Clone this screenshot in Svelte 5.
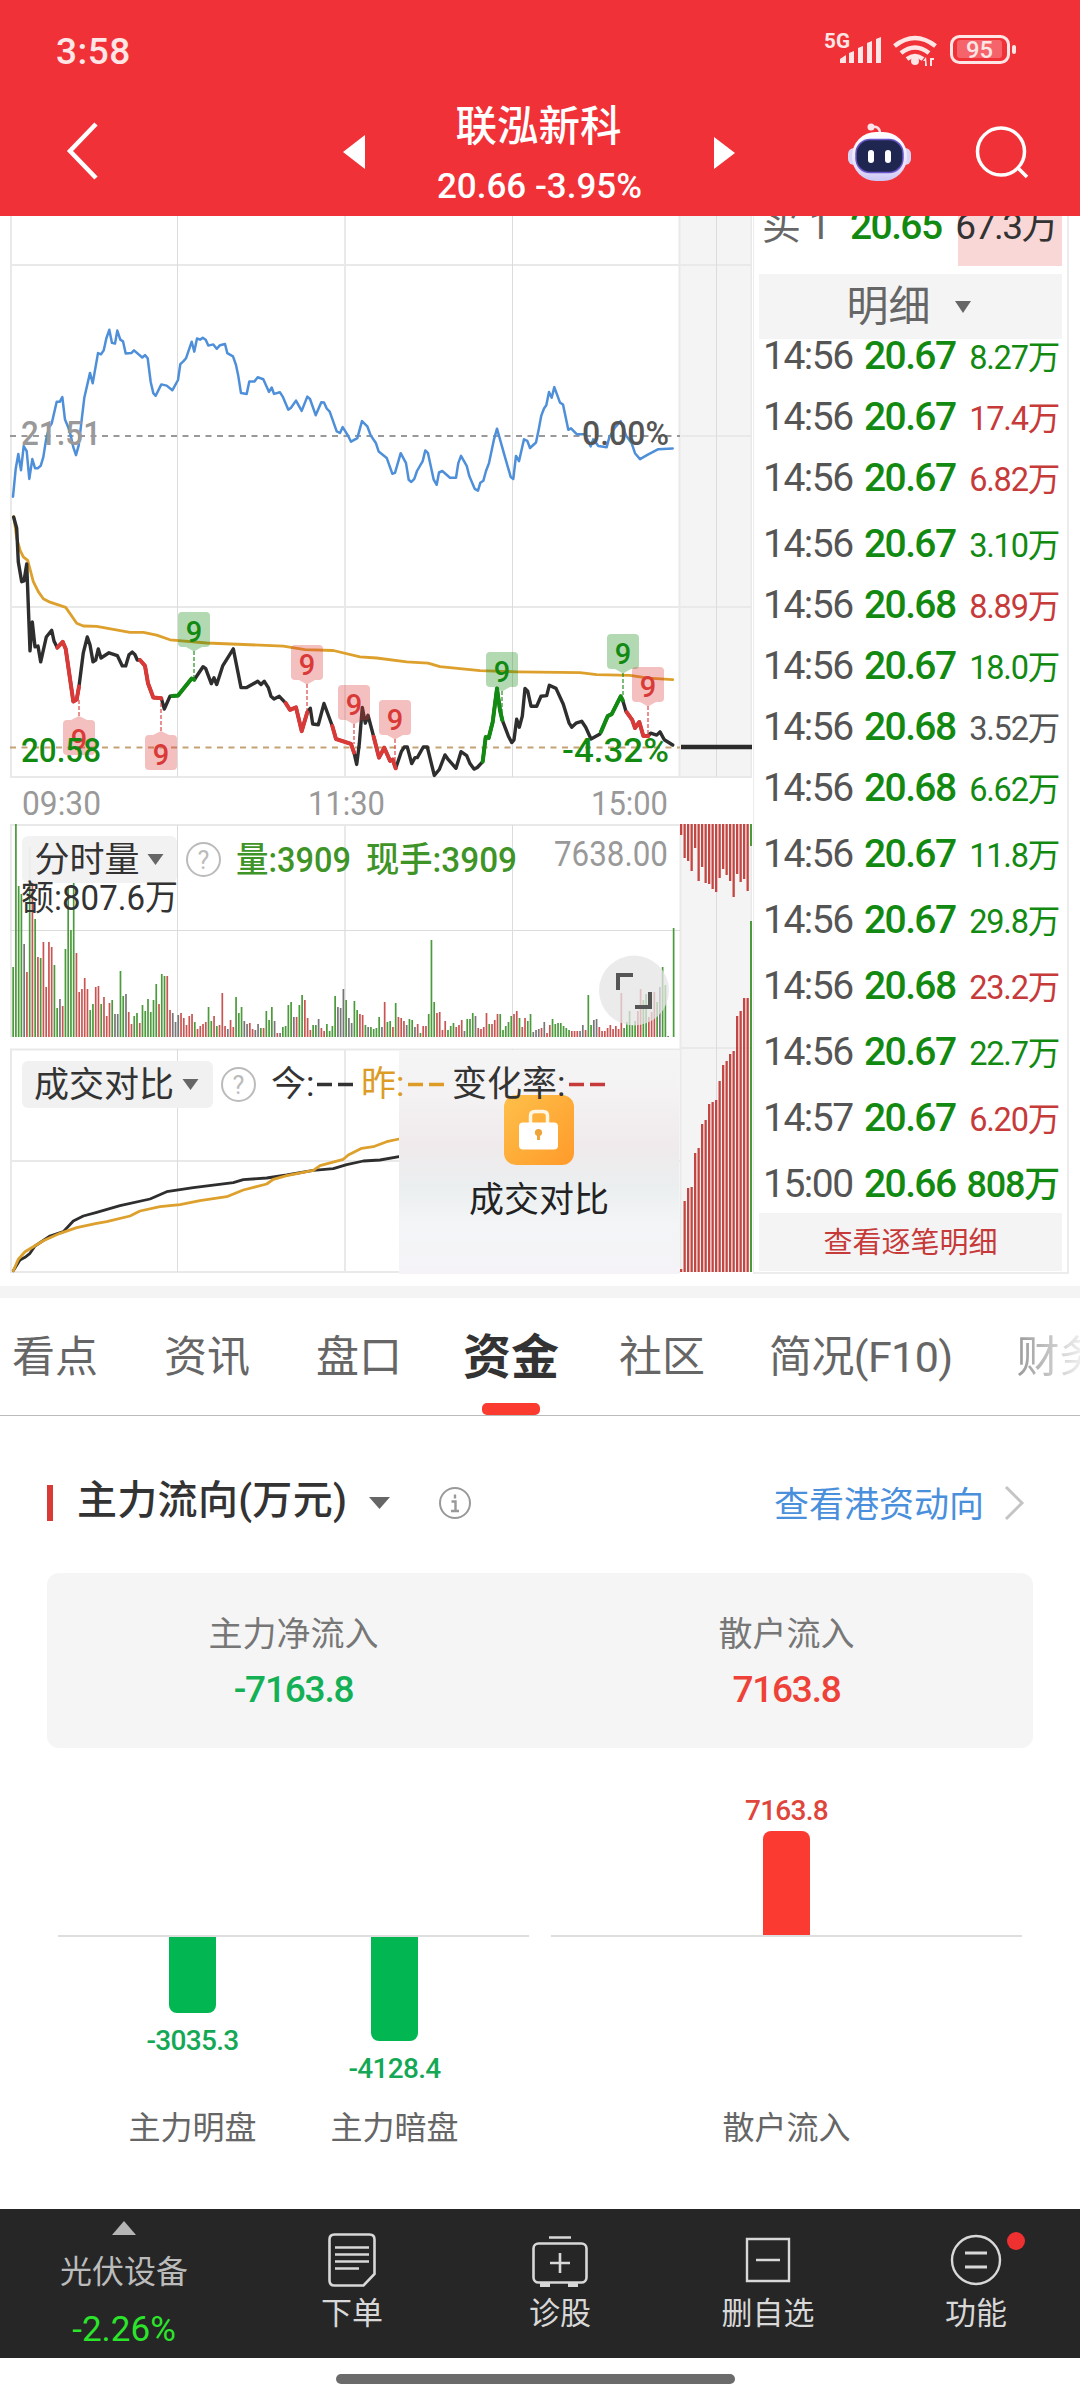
<script>
    // every point is "x,y" in chart units, see plot() for the scale
    const indexLine = "39,725 47,655 55,617 63,658 71,597 80,610 88,680 97,630 105,653 113,653 122,647 130,625 138,582 147,550 155,540 170,485 179,485 187,473 195,530 204,548 212,570 220,600 228,620 236,595 245,530 253,475 270,412 278,438 294,362 303,365 311,355 319,325 328,303 336,336 345,338 352,305 361,328 369,332 377,363 394,362 402,355 427,373 435,367 443,375 452,435 460,463 467,470 484,441 500,444 517,456 534,430 541,390 550,383 558,375 575,333 583,358 591,325 600,328 608,323 617,328 625,343 640,340 650,351 660,342 675,339 682,362 699,370 708,392 715,420 723,463 740,465 748,434 763,434 773,423 790,428 807,460 815,449 822,465 840,461 848,472 865,505 873,500 888,482 905,508 922,472 930,478 947,519 964,486 972,487 980,502 989,510 1010,560 1020,564 1028,549 1045,572 1053,586 1072,577 1086,534 1102,547 1112,570 1128,590 1136,611 1160,627 1177,667 1185,665 1202,615 1218,640 1226,682 1234,688 1243,680 1251,660 1268,635 1276,608 1284,615 1301,682 1310,695 1317,664 1327,660 1350,677 1368,677 1375,640 1383,622 1400,647 1408,673 1424,705 1434,710 1441,690 1450,685 1458,660 1467,640 1482,580 1491,553 1500,580 1515,625 1532,675 1540,680 1548,622 1557,635 1572,580 1582,584 1590,602 1608,588 1616,555 1624,520 1632,502 1639,494 1647,460 1655,475 1663,448 1680,487 1689,492 1705,556 1713,552 1730,567 1755,567 1772,598 1780,580 1795,597 1820,600 1828,575 1845,550 1862,534 1878,570 1895,590 1905,615 1920,630 1945,618 1975,605 2018,603";
    const averageLine = "41,775 50,830 60,860 70,877 83,886 100,940 115,965 130,983 150,992 197,1005 230,1045 250,1052 290,1053 390,1068 430,1068 470,1075 510,1087 620,1095 850,1103 915,1112 1000,1114 1080,1130 1130,1133 1220,1143 1284,1146 1320,1155 1440,1165 1550,1168 1740,1170 1790,1175 1890,1177 1945,1184 2018,1188";
    const priceLine = "41,777 50,805 55,890 65,940 72,938 80,895 83,960 90,1115 97,1042 105,1105 114,1103 122,1143 139,1080 155,1063 162,1090 172,1107 188,1092 197,1110 220,1243 230,1238 237,1205 250,1120 262,1080 270,1100 279,1143 287,1138 295,1110 303,1133 327,1120 352,1127 367,1153 377,1153 387,1125 397,1118 405,1125 412,1138 420,1138 435,1153 444,1197 460,1233 484,1235 493,1262 510,1230 534,1228 575,1185 583,1188 609,1155 617,1160 634,1198 642,1183 650,1200 668,1153 700,1110 723,1208 740,1208 773,1192 783,1200 793,1192 805,1208 813,1230 822,1237 838,1230 857,1247 870,1264 888,1258 905,1318 922,1270 931,1260 938,1300 955,1302 972,1248 997,1305 1008,1338 1053,1350 1062,1372 1070,1402 1078,1350 1087,1258 1096,1298 1104,1278 1121,1332 1137,1385 1153,1360 1170,1393 1178,1390 1187,1412 1204,1370 1213,1358 1222,1358 1235,1400 1245,1385 1252,1385 1270,1358 1282,1358 1303,1430 1318,1415 1335,1378 1343,1388 1368,1412 1383,1370 1400,1380 1410,1400 1422,1414 1432,1410 1448,1395 1457,1333 1466,1335 1478,1295 1491,1210 1500,1265 1507,1290 1525,1330 1535,1347 1542,1340 1550,1288 1558,1308 1567,1280 1575,1210 1583,1217 1593,1255 1610,1255 1623,1230 1640,1228 1648,1202 1668,1210 1690,1250 1707,1297 1715,1308 1728,1298 1745,1293 1757,1308 1773,1338 1800,1325 1823,1280 1835,1275 1862,1230 1868,1240 1878,1268 1897,1290 1905,1310 1918,1295 1930,1330 1945,1330 1952,1323 1970,1328 1980,1320 1993,1340 2018,1353";
    // parts of the price line that carry a signal
    const downParts = [
        "172,1107 188,1092 197,1110 220,1243 230,1238 237,1205",
        "420,1138 435,1153 444,1197 460,1233 484,1235",
        "857,1247 870,1264 888,1258 905,1318 922,1270",
        "997,1305 1008,1338 1053,1350 1062,1372",
        "1121,1332 1137,1385 1153,1360 1170,1393 1178,1390 1187,1412",
        "1880,1270 1897,1290 1905,1310 1918,1295 1930,1330 1945,1330",
    ];
    const upParts = [
        "517,1229 534,1228 575,1185 583,1188",
        "1448,1395 1457,1333 1466,1335 1478,1295 1491,1210 1500,1265 1507,1290",
        "1803,1320 1823,1280 1835,1275 1862,1230 1868,1240",
    ];
    const todayLine = "40,1382 60,1350 75,1342 90,1330 105,1308 150,1278 190,1265 220,1233 250,1218 290,1207 360,1187 450,1167 500,1145 580,1133 700,1118 730,1109 800,1104 860,1095 940,1081 1000,1076 1040,1064 1090,1053 1140,1050 1197,1040";
    const yesterdayLine = "40,1382 55,1348 75,1325 105,1307 130,1292 180,1270 230,1253 290,1240 320,1235 390,1218 420,1203 480,1190 540,1184 600,1172 680,1160 730,1140 800,1122 820,1108 860,1097 940,1081 960,1067 1030,1048 1045,1035 1085,1015 1120,1010 1160,995 1197,987";

    function plot(points, top, unitY) {
        return points.split(" ").map((p) => {
            const [x, y] = p.split(",").map(Number);
            return (x / 3).toFixed(1) + "," + (top + y * unitY).toFixed(1);
        }).join(" ");
    }
    const price = (points) => plot(points, 210, 0.3954);
    const compare = (points) => plot(points, 810, 1 / 3);

    // one bar a minute: g = up, r = down, k = flat, then the height
    const volume = "g70 g213 g151 g143 k93 r65 g190 r157 g118 r80 g79 r95 r50 r95 r90 g72 g29 k38 r31 g88 g150 g107 g154 r84 r45 r48 r59 r48 g27 g33 r50 r51 g33 r40 r21 r34 g37 k23 k23 g66 g41 k43 r25 r13 g21 g24 r14 g32 g26 g38 g25 g37 g53 r33 g63 g61 r61 r27 k24 k15 k22 r24 r19 r12 r21 r23 g15 r8 r11 r13 r15 g30 g16 r21 g11 r12 r44 r11 k8 r17 r10 g40 g24 g30 k16 k13 r14 r8 k7 k13 g9 r9 g26 g17 g30 k16 r4 k4 g10 g11 g32 g35 k20 r20 g32 g42 r37 r19 r7 g12 g12 k18 r9 r6 g13 g6 g11 g41 k30 k29 k48 g37 k19 k14 g36 g27 r23 r22 g12 k10 g10 g8 g9 g20 k10 r35 g15 g16 r10 g34 r20 r19 r16 k12 g18 g17 k10 r13 g4 r11 r11 g23 g97 g35 r24 r25 r7 r16 g7 g11 g14 r10 r12 r17 k6 g18 g18 g24 k21 r9 r8 r10 r24 g13 r13 r17 r23 g23 g7 g11 g15 g21 r23 r26 g19 r10 r19 g16 g23 k5 k7 k8 r9 k15 r4 r12 g18 g13 g14 g14 g11 g9 g7 r6 r6 r6 k6 k12 r7 g42 g12 k17 k18 r10 r6 r6 r9 r12 r8 r11 r8 r44 g9 g15 g26 g12 g16 r26 r48 g37 g43 r20 r25 r45 g35 k50 g70 g52 k1 k0 g109"
        .split(" ").map((b) => ({ kind: b[0], h: +b.slice(1) }));

    // closing auction
    const auctionTop = [11, 34, 37, 47, 24, 57, 43, 59, 60, 65, 68, 54, 45, 51, 57, 73, 50, 58, 55, 67, 22];
    const auctionBottom = [3, 71, 84, 85, 119, 124, 148, 152, 168, 170, 172, 191, 207, 211, 218, 221, 256, 261, 274, 274, 351];

    // y = top of the box, end = where the dashed leader stops
    const flags = [
        { x: 79, y: 720, end: 698, up: false, below: true },
        { x: 161, y: 735, end: 698, up: false, below: true },
        { x: 194, y: 612, end: 680, up: true },
        { x: 307, y: 645, end: 712, up: false },
        { x: 354, y: 685, end: 744, up: false },
        { x: 395, y: 700, end: 768, up: false },
        { x: 502, y: 652, end: 720, up: true },
        { x: 623, y: 634, end: 697, up: true },
        { x: 648, y: 667, end: 737, up: false },
    ];

    const ticks = [
        ["14:56", "20.67", "8.27万", "up"],
        ["14:56", "20.67", "17.4万", "down"],
        ["14:56", "20.67", "6.82万", "down"],
        ["14:56", "20.67", "3.10万", "up"],
        ["14:56", "20.68", "8.89万", "down"],
        ["14:56", "20.67", "18.0万", "up"],
        ["14:56", "20.68", "3.52万", "flat"],
        ["14:56", "20.68", "6.62万", "up"],
        ["14:56", "20.67", "11.8万", "up"],
        ["14:56", "20.67", "29.8万", "up"],
        ["14:56", "20.68", "23.2万", "down"],
        ["14:56", "20.67", "22.7万", "up"],
        ["14:57", "20.67", "6.20万", "down"],
        ["15:00", "20.66", "808万", "up"],
    ];

    const tabs = ["看点", "资讯", "盘口", "资金", "社区", "简况(F10)", "财务"];
    let activeTab = 3;
</script>

<div class="page">
    <header>
        <div class="status">
            <span class="clock">3:58</span>
            <svg width="200" height="44" viewBox="820 28 200 44">
                <g fill="#ffe6e6">
                    <text x="824" y="48" font-size="21" font-weight="700" textLength="26" lengthAdjust="spacingAndGlyphs">5G</text>
                    <path d="M840 63v-4l6-4v8zM849 63v-10l5-2v12zM858 63v-15l5-2v17zM867 63v-20l5-2v22zM876 63v-24l5-2v26z" />
                    <circle cx="915" cy="61" r="4" />
                    <path d="M926 57l-3 4h2v5h2zM930 66v-8h4v2h-2v6z" />
                </g>
                <g fill="none" stroke="#ffe6e6" stroke-width="4.500">
                    <path d="M894.500 46q20.500-16 41 0M901 53q14-11 28 0M907 59q8-6 16 0" />
                    <rect x="951.500" y="36.500" width="57" height="26" rx="8" stroke-width="3" />
                </g>
                <rect x="957" y="40" width="45" height="18" rx="3" fill="#fff" opacity=".25" />
                <rect x="1012" y="45" width="4" height="9" rx="2" fill="#ffe6e6" />
                <text x="966" y="58" font-size="23" font-weight="500" fill="#ffe6e6" textLength="27" lengthAdjust="spacingAndGlyphs">95</text>
            </svg>
        </div>
        <nav>
            <svg class="back" width="34" height="60" viewBox="0 0 34 60"><path d="M31 2L5 29l26 27" fill="none" stroke="#fff" stroke-width="4.500" /></svg>
            <svg class="prev" width="22" height="36" viewBox="0 0 22 36"><path d="M22 1v34L0 18z" fill="#fff" /></svg>
            <div class="stock">
                <h1>联泓新科</h1>
                <p>20.66 -3.95%</p>
            </div>
            <svg class="next" width="22" height="36" viewBox="0 0 22 36"><path d="M0 3v32l21-16z" fill="#fff" /></svg>
            <svg class="robot" width="64" height="60" viewBox="848 121 64 60">
                <defs>
                    <linearGradient id="shell" x1="0" y1="0" x2="0" y2="1">
                        <stop offset="0" stop-color="#fff" />
                        <stop offset=".7" stop-color="#e6e0fa" />
                        <stop offset="1" stop-color="#cbc6f4" />
                    </linearGradient>
                </defs>
                <path d="M871 126q9-2 9 7" fill="none" stroke="#f9dfe6" stroke-width="2.500" />
                <circle cx="871" cy="126" r="3.500" fill="#fbe4ea" />
                <rect x="848" y="147" width="63" height="17" rx="6" fill="#d9d4f5" />
                <rect x="852" y="131" width="55" height="49" rx="24" fill="url(#shell)" />
                <rect x="856" y="138.500" width="47" height="33" rx="14" fill="#1f2750" stroke="#6a55c8" stroke-width="1.500" />
                <rect x="868" y="149" width="6" height="13" rx="3" fill="#fff" />
                <rect x="885" y="149" width="6" height="13" rx="3" fill="#fff" />
            </svg>
            <svg class="search" width="54" height="54" viewBox="975 125 54 54">
                <g fill="none" stroke="#fff" stroke-width="3.500">
                    <circle cx="1001" cy="151.500" r="23.500" />
                    <path d="M1017.500 167.500l9.500 9.500" />
                </g>
            </svg>
        </nav>
    </header>

    <main>
        <svg class="chart" width="752" height="1070" viewBox="0 216 752 1070">
            <defs>
                <linearGradient id="lock" x1="0" y1="0" x2="1" y2="1">
                    <stop offset="0" stop-color="#fec04a" />
                    <stop offset="1" stop-color="#ff9a2a" />
                </linearGradient>
                <linearGradient id="veil" x1="0" y1="0" x2="0" y2="1">
                    <stop offset="0" stop-color="#f5f5f5" />
                    <stop offset=".2" stop-color="#f4f2f3" />
                    <stop offset=".42" stop-color="#f0eaec" />
                    <stop offset=".6" stop-color="#ebeeef" />
                    <stop offset=".78" stop-color="#f3f5f7" />
                    <stop offset="1" stop-color="#f5f3f7" />
                </linearGradient>
            </defs>

            <rect x="679" y="216" width="73" height="561" fill="#f4f4f4" />
            <rect x="680" y="824" width="72" height="448" fill="#f4f4f4" />
            <g class="grid">
                <path d="M11 216v561M345 216v561M679.500 216v561M751.500 216v561M10 265h742M10 607h742M681 436h71M10 777h742" />
                <path d="M11 825v212M345 825v212M10 825h670M680.500 825v447M751.500 825v447M680 1048h72M11 1049v223M345 1049v223M10 1049.500h670M10 1161h670M10 1272h670" />
                <path class="thin" d="M177.500 216v561M512.500 216v561M716.500 216v561M177.500 825v212M512.500 825v212M716.500 825v447M10 930.500h670M177.500 1049v223M512.500 1049v223" />
            </g>

            <path d="M10 436h670" stroke="#999" stroke-width="2" stroke-dasharray="6 5.500" />
            <path d="M10 747.500h670" stroke="#c5a274" stroke-width="2" stroke-dasharray="6 5.500" />
            <polyline points={price(indexLine)} class="line" stroke="#4e8fd9" stroke-width="2.500" />
            <polyline points={price(averageLine)} class="line" stroke="#dda02c" stroke-width="2.800" />
            <polyline points={price(priceLine)} class="line" stroke="#2e2e2e" stroke-width="3.400" />
            {#each downParts as part}
                <polyline points={price(part)} class="line" stroke="#d93a38" stroke-width="4" />
            {/each}
            {#each upParts as part}
                <polyline points={price(part)} class="line" stroke="#128a12" stroke-width="4" />
            {/each}
            <path d="M681 747h71" stroke="#2b2b2b" stroke-width="4.500" />

            {#each flags as flag}
                <g class={flag.up ? "flag rise" : "flag fall"}>
                    <path class="leader" d="M{flag.x} {flag.below ? flag.y - 4 : flag.y + 39}V{flag.end}" />
                    <rect x={flag.x - 16} y={flag.y} width="32" height="35" rx="4" />
                    {#if flag.below}
                        <path class="tip" d="M{flag.x - 8} {flag.y}l8-4 8 4z" />
                    {:else}
                        <path class="tip" d="M{flag.x - 8} {flag.y + 35}l8 4.500 8-4.500z" />
                    {/if}
                    <text x={flag.x} y={flag.y + 30} font-size="29" font-weight="500" text-anchor="middle">9</text>
                </g>
            {/each}

            <g font-size="34">
                <text x="21" y="445" fill="#999" font-weight="500" textLength="80" lengthAdjust="spacingAndGlyphs">21.51</text>
                <text x="582" y="445" fill="#555" font-weight="500" textLength="87" lengthAdjust="spacingAndGlyphs">0.00%</text>
                <text x="21" y="762" fill="#128a12" font-weight="500" textLength="80" lengthAdjust="spacingAndGlyphs">20.58</text>
                <text x="562" y="762" fill="#128a12" font-weight="500" textLength="107" lengthAdjust="spacingAndGlyphs">-4.32%</text>
                <text x="22" y="815" fill="#999" textLength="79" lengthAdjust="spacingAndGlyphs">09:30</text>
                <text x="308" y="815" fill="#999" textLength="77" lengthAdjust="spacingAndGlyphs">11:30</text>
                <text x="591" y="815" fill="#999" textLength="77" lengthAdjust="spacingAndGlyphs">15:00</text>
            </g>

            <!-- minute volume -->
            {#each volume as bar, i}
                <rect class={bar.kind} x={12.3 + i * 2.752} y={1037 - bar.h} width="1.700" height={bar.h} />
            {/each}
            <rect x="22" y="836" width="155" height="47" rx="6" fill="#f1f1f1" opacity=".95" />
            <text x="34.500" y="872" font-size="35" fill="#333">分时量</text>
            <path d="M147.500 854h16l-8 11z" fill="#666" />
            <g class="help">
                <circle cx="203.500" cy="859.500" r="16.500" />
                <text x="203.500" y="868.500" text-anchor="middle">?</text>
            </g>
            <g font-size="35">
                <text x="236" y="872" fill="#3f9428" font-weight="500" textLength="115" lengthAdjust="spacingAndGlyphs">量:3909</text>
                <text x="366" y="872" fill="#3f9428" font-weight="500" textLength="151" lengthAdjust="spacingAndGlyphs">现手:3909</text>
                <text x="554" y="866" fill="#999" textLength="114" lengthAdjust="spacingAndGlyphs">7638.00</text>
                <text x="21" y="910" fill="#333" textLength="157" lengthAdjust="spacingAndGlyphs">额:807.6万</text>
            </g>
            <circle cx="634" cy="990.500" r="35" fill="#e4e4e4" opacity=".75" />
            <path d="M618 990v-15h15M650 992v15h-15" fill="none" stroke="#555" stroke-width="4" />

            {#each auctionTop as h, i}
                <rect class={i === 20 ? "g" : "auction"} x={680 + i * 3.5} y="824" width="2.300" height={h} />
            {/each}
            {#each auctionBottom as h, i}
                <rect class={i === 20 ? "g" : "auction"} x={680 + i * 3.5} y={1272 - h} width="2.300" height={h} />
            {/each}

            <!-- turnover against yesterday -->
            <rect x="22" y="1061" width="191" height="47" rx="6" fill="#f1f1f1" />
            <text x="34" y="1097" font-size="35" fill="#333">成交对比</text>
            <path d="M182.500 1079h16l-8 11z" fill="#666" />
            <g class="help">
                <circle cx="238.500" cy="1084.500" r="16.500" />
                <text x="238.500" y="1093.500" text-anchor="middle">?</text>
            </g>
            <polyline points={compare(todayLine)} class="line" stroke="#2e2e2e" stroke-width="2.800" />
            <polyline points={compare(yesterdayLine)} class="line" stroke="#dda02c" stroke-width="2.800" />
            <rect x="399" y="1050" width="280" height="224" fill="url(#veil)" />
            <rect x="504" y="1095" width="70" height="70" rx="12" fill="url(#lock)" />
            <g font-size="35" fill="#333">
                <text x="271" y="1096">今:</text>
                <text x="361" y="1096" fill="#dc9c26">昨:</text>
                <text x="452" y="1096">变化率:</text>
                <text x="469" y="1212" fill="#222">成交对比</text>
            </g>
            <g stroke-width="3.500">
                <path d="M317 1084.500h15M338 1084.500h15" stroke="#333" />
                <path d="M408 1084.500h15M429 1084.500h15" stroke="#dc9c26" />
                <path d="M569 1084.500h15M590 1084.500h15" stroke="#c63a3a" />
            </g>
            <path d="M530.500 1124v-8q0-4.500 4.500-4.500h8q4.500 0 4.500 4.500v8" fill="none" stroke="#fff6e4" stroke-width="3.500" />
            <rect x="519" y="1122.500" width="39" height="27" rx="4" fill="#fff" />
            <circle cx="538.500" cy="1132.500" r="3.600" fill="#eda43a" />
            <path d="M538.500 1133v7" stroke="#eda43a" stroke-width="3" />
        </svg>

        <aside>
            <div class="bid">
                <span class="name">买 1</span>
                <span class="price">20.65</span>
                <span class="amount">67.3万</span>
            </div>
            <div class="detail">明细 <svg width="16" height="12" viewBox="0 0 16 12"><path d="M0 0h16L8 12z" fill="#666" /></svg></div>
            <ul>
                {#each ticks as [time, value, amount, side], i}
                    <li class:first={i === 0} class:tall={i === 3 || i > 7} class:large={i === 13}>
                        <span class="time">{time}</span>
                        <span class="price">{value}</span>
                        <span class="amount {side}">{amount}</span>
                    </li>
                {/each}
            </ul>
            <a class="more" href="#ticks">查看逐笔明细</a>
        </aside>
    </main>

    <div class="tabs">
        {#each tabs as tab, i}
            <button class:active={i === activeTab} on:click={() => (activeTab = i)}>{tab}</button>
        {/each}
    </div>

    <section>
        <div class="heading">
            <i></i>
            <h2>主力流向(万元)</h2>
            <svg class="caret" width="21" height="12" viewBox="0 0 21 12"><path d="M0 0h21L10.500 12z" fill="#666" /></svg>
            <svg width="34" height="34" viewBox="0 0 34 34">
                <circle cx="17" cy="17" r="15" fill="none" stroke="#999" stroke-width="2" />
                <path d="M17 8.500v4M13.500 15.500h4v9M13 25h8" fill="none" stroke="#999" stroke-width="2.400" />
            </svg>
            <a href="#hk">查看港资动向</a>
            <svg width="22" height="36" viewBox="0 0 22 36"><path d="M2 2l16 16L2 34" fill="none" stroke="#c4c4c4" stroke-width="3" /></svg>
        </div>

        <div class="summary">
            <div><span>主力净流入</span><b class="out">-7163.8</b></div>
            <div><span>散户流入</span><b class="in">7163.8</b></div>
        </div>

        <div class="flows">
            <div class="group">
                <div class="flow">
                    <div class="above"></div>
                    <div class="below"><i style="height: 76px"></i><b>-3035.3</b></div>
                    <span>主力明盘</span>
                </div>
                <div class="flow">
                    <div class="above"></div>
                    <div class="below"><i style="height: 104px"></i><b>-4128.4</b></div>
                    <span>主力暗盘</span>
                </div>
            </div>
            <div class="group">
                <div class="flow">
                    <div class="above"><b>7163.8</b><i style="height: 104px"></i></div>
                    <div class="below"></div>
                    <span>散户流入</span>
                </div>
            </div>
        </div>
    </section>

    <footer>
        <div class="sector">
            <svg width="24" height="14" viewBox="0 0 24 14"><path d="M12 0l12 14H0z" fill="#b5b5b5" /></svg>
            <span>光伏设备</span>
            <em>-2.26%</em>
        </div>
        <div class="item">
            <svg width="60" height="60" viewBox="322 2230 60 60">
                <g fill="none" stroke="#d8d8d8" stroke-width="2.600">
                    <path d="M334.500 2234.500h35q5 0 5 5v34.500l-11 11.500h-29q-5 0-5-5v-41q0-5 5-5z" />
                    <path d="M335 2247.500h34M335 2254.500h34M335 2261.500h34M335 2268.500h24" />
                </g>
            </svg>
            <span>下单</span>
        </div>
        <div class="item">
            <svg width="60" height="60" viewBox="530 2230 60 60">
                <g fill="none" stroke="#d8d8d8" stroke-width="2.600">
                    <rect x="533.500" y="2243.500" width="53" height="39" rx="5" />
                    <path d="M549 2237.500h22M550 2263h20M560 2253v20" />
                    <path d="M540 2285h10M568 2285h10" stroke-width="4" />
                </g>
            </svg>
            <span>诊股</span>
        </div>
        <div class="item">
            <svg width="60" height="60" viewBox="738 2230 60 60">
                <path d="M747 2239h42v42h-42zM756 2260h24" fill="none" stroke="#d8d8d8" stroke-width="2.400" />
            </svg>
            <span>删自选</span>
        </div>
        <div class="item">
            <svg width="60" height="60" viewBox="946 2230 60 60">
                <circle cx="976" cy="2260" r="24" fill="none" stroke="#d8d8d8" stroke-width="2.400" />
                <path d="M965 2253h22M965 2267h22" fill="none" stroke="#d8d8d8" stroke-width="2.800" />
            </svg>
            <span>功能</span>
            <i class="dot"></i>
        </div>
    </footer>
    <div class="home"></div>
</div>

<style>
    :global(body) {
        background: #fff;
    }

    .page {
        width: 1080px;
        height: 2400px;
        overflow: hidden;
        font-family: Roboto, "Noto Sans CJK SC", sans-serif;
        background: #fff;
    }

    h1, h2, p, ul {
        margin: 0;
        padding: 0;
    }

    svg {
        display: block;
        flex: none;
    }

    a {
        text-decoration: none;
    }

    header {
        height: 216px;
        color: #fff;
        background: #f13138;
    }

    .status {
        display: flex;
        justify-content: space-between;
        align-items: center;
        height: 100px;
        padding: 0 60px 0 56px;
        box-sizing: border-box;
    }

    .clock {
        padding-top: 2px;
        font-size: 37px;
        font-weight: 500;
        color: #ffe6e6;
        letter-spacing: 0.5px;
    }

    nav {
        display: flex;
        align-items: center;
        height: 104px;
    }

    .back { margin-left: 65px; }
    .prev { margin-left: 244px; }
    .robot { margin-left: 112px; }
    .search { margin-left: 63px; }

    .stock {
        width: 349px;
        text-align: center;
    }

    .stock h1 {
        font-size: 41.5px;
        font-weight: 500;
        line-height: 60px;
        padding-top: 9px;
        margin-right: 2px;
    }

    .stock p {
        font-size: 35px;
        font-weight: 500;
        line-height: 60px;
    }

    main {
        display: flex;
        height: 1070px;
    }

    .grid {
        fill: none;
        stroke: #e9e9e9;
        stroke-width: 2;
    }

    .grid .thin {
        stroke: #dcdcdc;
        stroke-width: 1;
    }

    .line {
        fill: none;
        stroke-linejoin: round;
        stroke-linecap: round;
    }

    .rise { fill: #128a12; stroke: #128a12; }
    .fall { fill: #d93a38; stroke: #d93a38; }
    .flag text { stroke: none; }
    .flag rect, .tip { stroke: none; fill-opacity: 0.32; }
    .leader { stroke-width: 1.5; stroke-dasharray: 4 2; opacity: 0.75; }

    .g { fill: #4b9a3b; }
    .r { fill: #c95553; }
    .k { fill: #777; }
    .auction { fill: #c44642; }

    .help circle { fill: #fff; stroke: #bbb; stroke-width: 2; }
    .help text { fill: #bbb; font-size: 25px; }

    aside {
        width: 316px;
        height: 1058px;
        margin-left: 1px;
        padding: 0 5px;
        box-sizing: border-box;
        border: 1px solid #ececec;
        border-width: 0 2px 2px 1px;
    }

    .bid {
        display: flex;
        align-items: baseline;
        height: 50px;
        line-height: 20px;
        overflow: hidden;
        font-size: 39px;
        background: linear-gradient(to right, transparent 199px, #fad7d7 199px);
    }

    .bid .name {
        width: 91px;
        padding-left: 3px;
        box-sizing: border-box;
        color: #666;
        letter-spacing: -1px;
    }

    .bid .amount {
        font-size: 37px;
        color: #333;
        padding-right: 5px;
        letter-spacing: -1.5px;
    }

    .detail {
        display: flex;
        align-items: center;
        justify-content: center;
        gap: 24px;
        height: 65px;
        margin-top: 8px;
        padding-right: 4px;
        box-sizing: border-box;
        font-size: 42px;
        line-height: 60px;
        color: #666;
        background: #f4f4f4;
    }

    ul {
        list-style: none;
        padding-top: 2px;
    }

    li {
        display: flex;
        align-items: baseline;
        height: 61px;
        line-height: 61px;
        box-sizing: border-box;
        font-size: 39px;
    }

    li.first {
        height: 46px;
        line-height: 31px;
    }

    li.tall {
        height: 66px;
        padding-top: 5px;
    }

    .time {
        width: 105px;
        padding-left: 4px;
        box-sizing: border-box;
        color: #555;
        letter-spacing: -1.5px;
    }

    .price {
        font-weight: 500;
        color: #128a12;
        letter-spacing: -1.6px;
    }

    .amount {
        flex: 1;
        text-align: right;
        white-space: nowrap;
        font-size: 32.5px;
        letter-spacing: -1.2px;
        padding-right: 3px;
    }

    .large .amount {
        font-size: 36px;
        font-weight: 500;
    }

    .amount.up { color: #128a12; }
    .amount.down { color: #c63a3a; }
    .amount.flat { color: #555; }

    .more {
        display: block;
        height: 58px;
        margin-top: -2px;
        line-height: 60px;
        text-align: center;
        font-size: 29px;
        color: #c63a3a;
        background: #f4f4f4;
    }

    .tabs {
        display: flex;
        height: 130px;
        padding-left: 12px;
        box-sizing: border-box;
        border-top: 12px solid #f4f4f4;
        border-bottom: 1px solid #bbb;
        overflow: hidden;
    }

    .tabs button {
        display: flex;
        flex: none;
        flex-direction: column;
        align-items: center;
        margin: 0 66px 0 0;
        padding: 0;
        border: 0;
        font: 43px/119px Roboto, "Noto Sans CJK SC", sans-serif;
        color: #666;
        background: none;
    }

    .tabs button:nth-child(n + 5) {
        margin-right: 64px;
    }

    .tabs button:nth-child(6) {
        letter-spacing: -0.6px;
    }

    .tabs .active {
        margin: 0 60px 0 -5px;
        font-size: 48px;
        font-weight: 700;
        color: #333;
    }

    .tabs .active::after {
        content: "";
        width: 58px;
        height: 12px;
        margin-top: -14px;
        border-radius: 5px;
        background: #fb3a30;
    }

    .tabs button:last-child {
        color: transparent;
        background: linear-gradient(to right, #999, #f4f4f4 68px);
        background-clip: text;
    }

    section {
        height: 793px;
    }

    .heading {
        display: flex;
        align-items: center;
        height: 157px;
        padding: 17px 54px 0 47px;
        box-sizing: border-box;
    }

    .heading i {
        width: 6px;
        height: 36px;
        margin-right: 24px;
        background: #d93a35;
    }

    h2 {
        font-size: 40px;
        font-weight: 500;
        line-height: 50px;
        padding-bottom: 4px;
        letter-spacing: 0.3px;
        color: #333;
    }

    .caret { margin: 0 48px 0 22px; }

    .heading a {
        margin: 0 20px 0 auto;
        padding-bottom: 4px;
        font-size: 35px;
        color: #4a8fdc;
    }

    .summary {
        display: flex;
        height: 175px;
        margin: 0 47px;
        border-radius: 12px;
        background: #f5f5f5;
    }

    .summary div {
        flex: 1;
        display: flex;
        flex-direction: column;
        align-items: center;
        padding-top: 33px;
        line-height: 56px;
    }

    .summary span {
        font-size: 34px;
        color: #777;
    }

    .summary b {
        font-size: 37px;
        font-weight: 500;
        letter-spacing: -1.2px;
    }

    .out { color: #14b055; }
    .in { color: #ee4238; }

    .flows {
        display: flex;
        gap: 22px;
        padding: 0 58px;
    }

    .group {
        flex: 1;
        display: flex;
        justify-content: center;
        background: linear-gradient(#dedede, #dedede) 0 187px / 100% 2px no-repeat;
    }

    .flow {
        display: flex;
        flex-direction: column;
        align-items: center;
        width: 202px;
    }

    .flow i {
        width: 47px;
        border-radius: 0 0 8px 8px;
        background: #02b652;
    }

    .flow b {
        font-size: 28px;
        font-weight: 500;
        line-height: 40px;
        letter-spacing: -0.7px;
        color: #14a856;
    }

    .above, .below {
        display: flex;
        flex-direction: column;
        align-items: center;
    }

    .above {
        justify-content: flex-end;
        height: 187px;
    }

    .above i {
        border-radius: 8px 8px 0 0;
        background: #fb3b32;
    }

    .above b { color: #e0453c; }

    .below {
        height: 169px;
        padding-top: 2px;
        box-sizing: content-box;
    }

    .below b { margin-top: 8px; }

    .flow span {
        font-size: 32px;
        line-height: 44px;
        color: #666;
    }

    footer {
        display: flex;
        height: 149px;
        background: #262626;
    }

    .sector {
        display: flex;
        flex-direction: column;
        align-items: center;
        width: 248px;
        padding-top: 12px;
        box-sizing: border-box;
        font-size: 32px;
        color: #bbb;
    }

    .sector span {
        margin-top: 13px;
        line-height: 48px;
    }

    .sector em {
        margin-top: 12px;
        line-height: 44px;
        font-style: normal;
        font-size: 35px;
        color: #2be52b;
    }

    .item {
        position: relative;
        display: flex;
        flex-direction: column;
        align-items: center;
        width: 208px;
        padding-top: 21px;
        box-sizing: border-box;
    }

    .item span {
        font-size: 31px;
        line-height: 48px;
        color: #d8d8d8;
    }

    .dot {
        position: absolute;
        left: 135px;
        top: 23px;
        width: 18px;
        height: 18px;
        border-radius: 50%;
        background: #ee3030;
    }

    .home {
        width: 399px;
        height: 10px;
        margin: 16px 0 0 336px;
        border-radius: 5px;
        background: #6b6b6b;
    }
</style>
